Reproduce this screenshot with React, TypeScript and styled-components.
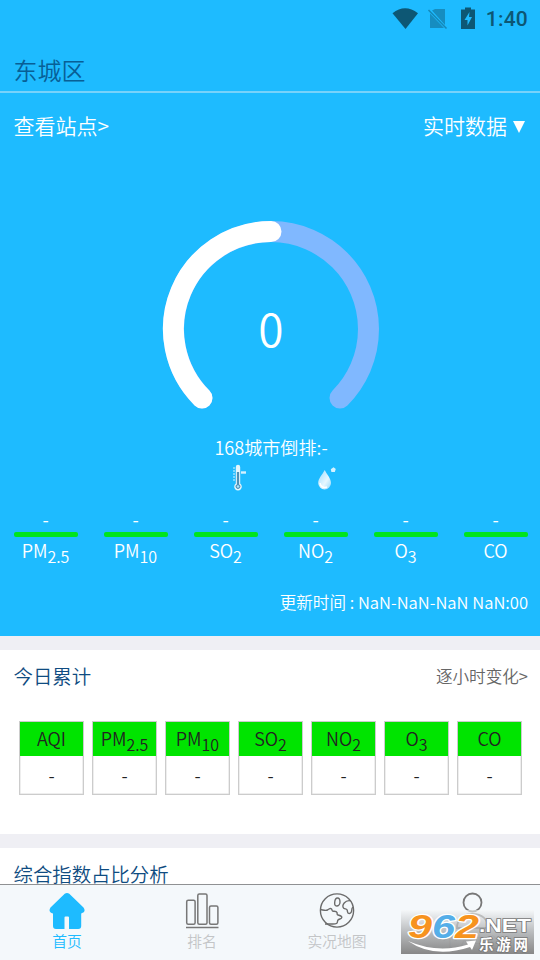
import type { ReactNode } from 'react';
import styled, { createGlobalStyle } from 'styled-components';

const GlobalStyle = createGlobalStyle`
  * {
    box-sizing: border-box;
  }

  body {
    margin: 0;
    font-family: "Noto Sans CJK SC", "Noto Sans", sans-serif;
    font-weight: 350;
  }
`

const Screen = styled.div`
  position: relative;
  display: flex;
  flex-direction: column;
  width: 540px;
  height: 960px;
  overflow: hidden;
  background: #fff;
`

const Header = styled.header`
  flex: none;
  height: 93px;
  background: #1ebbff;
  border-bottom: 2px solid #78d2fa;
`

const StatusBar = styled.div`
  display: flex;
  justify-content: flex-end;
  align-items: center;
  height: 37px;
  padding-right: 12px;
  color: #0d5774;
`

const StatusIcons = styled.svg`
  width: 86px;
  height: 24px;
  margin-right: 8px;
`

const Clock = styled.span`
  font: 500 21px/24px Roboto, sans-serif;
  letter-spacing: 0.2px;
`

const City = styled.div`
  padding: 15px 13.5px 0;
  font-size: 24px;
  line-height: 36px;
  color: #085f96;
`

const Content = styled.main`
  flex: 1;
  min-height: 0;
  overflow: hidden;
  background: #efeff4;
`

const Hero = styled.section`
  display: flex;
  flex-direction: column;
  height: 543px;
  background: #1ebbff;
  color: #fff;
`

const HeroLinks = styled.div`
  display: flex;
  justify-content: space-between;
  padding: 17px 15px 0 13.5px;
  font-size: 21px;
  line-height: 30px;
`

const Select = styled.div`
  display: flex;
  align-items: center;
  gap: 6px;
`

const Arrow = styled.i`
  margin-top: 3px;
  border: solid transparent;
  border-width: 12px 6px 0;
  border-top-color: #fff;
`

const Gauge = styled.svg`
  width: 220px;
  height: 200px;
  margin: 79px 0 0 161px;
`

const Rank = styled.div`
  margin-top: 14px;
  padding-left: 2px;
  font-size: 18.1px;
  line-height: 28px;
  text-align: center;
`

const Weather = styled.div`
  display: flex;
  gap: 64px;
  height: 32px;
  padding-left: 228px;

  svg {
    width: 24px;
    height: 32px;
  }
`

const Pollutants = styled.div`
  display: grid;
  grid-template-columns: repeat(6, 64px);
  column-gap: 26px;
  margin: 12px 0 0 13.5px;
`

const Pollutant = styled.div`
  font-size: 18px;
  line-height: 24px;
  text-align: center;

  sub {
    font-size: 16px;
    line-height: 0;
    vertical-align: -5px;
  }
`

const Level = styled.div`
  height: 27px;
  font-weight: 400;
  line-height: 28px;
`

const LevelBar = styled.div`
  height: 5px;
  margin-bottom: 1px;
  border-radius: 2px;
  background: #00e41e;
`

const Updated = styled.div`
  margin-top: 28px;
  padding-right: 12px;
  font-size: 16.6px;
  line-height: 24px;
  text-align: right;
`

const Panel = styled.section<{ $height: number }>`
  height: ${(p) => p.$height}px;
  margin-top: 14px;
  background: #fff;
`

const PanelHead = styled.div`
  display: flex;
  justify-content: space-between;
  align-items: center;
  padding: 12px 12px 0 13.5px;
  line-height: 28px;
`

const PanelTitle = styled.h2`
  margin: 0;
  font-size: 19.4px;
  font-weight: inherit;
  color: #0f4c81;
`

const PanelLink = styled.span`
  font-size: 16.6px;
  color: #666;
`

const Cards = styled.div`
  display: flex;
  justify-content: space-between;
  padding: 31px 18px 0 19px;
`

const Card = styled.div`
  width: 65px;
  height: 74px;
  border: 1px solid #ccc;
  box-shadow: inset 0 0 0 0.5px #ddd;
  font-size: 18px;
  text-align: center;
  color: #222;

  sub {
    font-size: 16px;
    line-height: 0;
    vertical-align: -5px;
  }
`

const CardHead = styled.div`
  height: 34px;
  line-height: 32px;
  background: #00e400;
`

const CardValue = styled.div`
  line-height: 38px;
`

const TabBar = styled.nav`
  display: grid;
  grid-template-columns: repeat(4, 1fr);
  flex: none;
  height: 76px;
  border-top: 1px solid #8f9193;
  background: #f4f8fb;
`

const Tab = styled.div<{ $active?: boolean }>`
  display: flex;
  flex-direction: column;
  align-items: center;
  padding: 7px 1px 0 0;
  font-size: 14.8px;
  line-height: 22px;
  color: ${(p) => (p.$active ? '#1ebbff' : '#c3c5c7')};

  svg {
    width: 38px;
    height: 38px;
  }
`

const Watermark = styled.div`
  position: absolute;
  left: 401px;
  top: 910px;
  width: 133px;
  height: 44px;
  background: linear-gradient(rgba(245, 247, 248, 0.6), rgba(175, 177, 179, 0.85) 50%, rgba(128, 128, 128, 0.94));

  svg {
    display: block;
  }
`

const pollutants: { key: string; label: ReactNode }[] = [
  { key: 'pm25', label: <>PM<sub>2.5</sub></> },
  { key: 'pm10', label: <>PM<sub>10</sub></> },
  { key: 'so2', label: <>SO<sub>2</sub></> },
  { key: 'no2', label: <>NO<sub>2</sub></> },
  { key: 'o3', label: <>O<sub>3</sub></> },
  { key: 'co', label: 'CO' },
]

const totals = [{ key: 'aqi', label: 'AQI' as ReactNode }, ...pollutants]

function AqiGauge() {
  return (
    <Gauge viewBox="161 219 220 200" fill="none" strokeWidth="21" strokeLinecap="round">
      <path d="M202 398A97.5 97.5 0 1 1 340 398" stroke="#80b8ff" />
      <path d="M202 398A97.5 97.5 0 0 1 271 231.5" stroke="#fff" />
      <text x="271" y="347" fill="#fff" fontSize="46" textAnchor="middle">0</text>
    </Gauge>
  )
}

function Thermometer() {
  return (
    <svg viewBox="228 462 24 32">
      <path d="M235.8 484.5V468a2.2 2.2 0 0 1 4.4 0v16.5a3.8 3.8 0 1 1-4.4 0Z" fill="#e5f6fc" />
      <path d="M236.900 473h2.200v12.500a2.300 2.300 0 1 1-2.200 0Z" fill="#4f8fb5" />
      <path d="M233 469h2M233 472h2M233 475h2M233 478h2M233 481h2" stroke="#d6f2ff" />
      <path d="M241 473.5h5" stroke="#d6f2ff" strokeWidth="2.4" />
      <circle cx="238" cy="487.5" r="1.3" fill="#a9e4ff" />
    </svg>
  )
}

function Droplet() {
  return (
    <svg viewBox="316 462 24 32">
      <defs>
        <linearGradient id="drop" x1="0" x2="1" y1="0" y2="1">
          <stop offset="0" stopColor="#9adcff" />
          <stop offset="0.6" stopColor="#e6f7ff" />
          <stop offset="1" stopColor="#94d9fb" />
        </linearGradient>
      </defs>
      <path d="M324.700 471c2 4.200 6.300 8.200 6.300 13a6.400 6.400 0 0 1-12.800 0c0-4.800 4.500-8.800 6.500-13Z" fill="url(#drop)" />
      <path d="M320 484c.5 4 4 5 7 4" stroke="#fff" strokeWidth="1.500" fill="none" />
      <path d="M333.500 468.200l2.300 1.700-1 3-3.400.2-.6-2.800Z" fill="#d6f2ff" />
    </svg>
  )
}

function HomeIcon() {
  return (
    <svg viewBox="48 892 38 38" fill="#1ebbff">
      <path d="M64.700 893.800q2.300-1.500 4.600 0L83.500 907.500q3 4.500-2.300 6V926q0 3-3 3H69v-11.500q0-1-1-1h-2.500q-1 0-1 1V929H56q-3 0-3-3v-12.500q-5.300-1.500-2.500-6Z" />
    </svg>
  )
}

function RankIcon() {
  return (
    <svg viewBox="183.500 892 38 38" fill="none" stroke="#777" strokeWidth="1.500">
      <rect x="187.200" y="900.200" width="8.400" height="24" rx="1.500" />
      <rect x="198.300" y="894" width="9.200" height="30.200" rx="1.500" />
      <rect x="210" y="906" width="8.400" height="18.200" rx="1.500" />
      <path d="M186.500 927.500h32.500" />
    </svg>
  )
}

function GlobeIcon() {
  return (
    <svg viewBox="318 892 38 38" fill="none" stroke="#6b6b6b" strokeWidth="1.400" strokeLinejoin="round">
      <circle cx="337" cy="910.500" r="16.600" />
      <path d="M337.500 898c1.500 0 2.500 2 2.500 4s-1.500 4-3.300 4-2.200-1.500-2-3.700 1.200-4.300 2.800-4.300Z" />
      <path d="M350.500 900.800c-3-.6-5 .7-6.300 2.200s-2 4-.5 5.200 2.500 0 3.300 1.600.2 3.400 1.700 3.600 3-1 3-3 .3-2.700 1.300-3.200" />
      <path d="M320.500 909.500c3 .5 5 1.500 7 .5s2.500-2.300 3.800-1.200.2 2.200 1.700 2.400 3.500-.2 4 1.300-.5 2 1 2.500 4 .8 3.800 2.500-2.800 1.200-3.800 2.500 0 2.700-1.500 3.500-3.500.5-6 .5h-5.500" />
    </svg>
  )
}

function UserIcon() {
  return (
    <svg viewBox="453 892 38 38" fill="none" stroke="#777" strokeWidth="1.800">
      <circle cx="472.500" cy="902.500" r="9" />
      <path d="M457 928c0-9 6-14 15.500-14s15.500 5 15.500 14Z" />
    </svg>
  )
}

function SiteMark() {
  return (
    <Watermark>
      <svg width="133" height="44" viewBox="0 0 133 44">
        <g fontFamily="Liberation Sans, sans-serif" fontWeight="700" fontStyle="italic" fontSize="34" stroke="#fff" strokeWidth="2.500" paintOrder="stroke" strokeLinejoin="round">
          <text x="7" y="28" textLength="24" lengthAdjust="spacingAndGlyphs" fill="#f7931e">9</text>
          <text x="31" y="28" textLength="23" lengthAdjust="spacingAndGlyphs" fill="#55aee8">6</text>
          <text x="54" y="28" textLength="24" lengthAdjust="spacingAndGlyphs" fill="#f7931e">2</text>
        </g>
        <path d="M7 31Q37 44 67 34.500L65 31.500 75 30.500 71 40 69 37Q33 49 7 31Z" fill="#fff" />
        <g fill="#fff" stroke="#777" strokeWidth="1.500" paintOrder="stroke" fontWeight="700">
          <text x="78" y="22" fontFamily="Liberation Sans, sans-serif" fontSize="19" textLength="52" lengthAdjust="spacingAndGlyphs">.NET</text>
          <text x="78" y="39.500" fontSize="14.500" textLength="49">乐游网</text>
        </g>
      </svg>
    </Watermark>
  )
}

export default function App() {
  return (
    <Screen>
      <GlobalStyle />
      <Header>
        <StatusBar>
          <StatusIcons viewBox="392 6 86 24" fill="currentColor">
            <path d="M392.500 12.200Q405 2.500 418 12.200L405.500 28Z" />
            <path d="M432 9.500l3-1.500h10v16ZM430 12.500l14 14.500h-14Z" opacity="0.450" />
            <path d="M428.500 9l18 18.500" stroke="currentColor" strokeWidth="1.500" opacity="0.500" />
            <path d="M461 8.500h4V6.500h6v2h4V28h-14Z" />
            <path d="M469.500 11l-5 8h3v5.500l4.500-8.500h-3Z" fill="#1ebbff" />
          </StatusIcons>
          <Clock>1:40</Clock>
        </StatusBar>
        <City>东城区</City>
      </Header>

      <Content>
        <Hero>
          <HeroLinks>
            <span>查看站点&gt;</span>
            <Select>实时数据<Arrow /></Select>
          </HeroLinks>
          <AqiGauge />
          <Rank>168城市倒排:-</Rank>
          <Weather>
            <Thermometer />
            <Droplet />
          </Weather>
          <Pollutants>
            {pollutants.map((item) => (
              <Pollutant key={item.key}>
                <Level>-</Level>
                <LevelBar />
                {item.label}
              </Pollutant>
            ))}
          </Pollutants>
          <Updated>更新时间 : NaN-NaN-NaN NaN:00</Updated>
        </Hero>

        <Panel $height={184}>
          <PanelHead>
            <PanelTitle>今日累计</PanelTitle>
            <PanelLink>逐小时变化&gt;</PanelLink>
          </PanelHead>
          <Cards>
            {totals.map((item) => (
              <Card key={item.key}>
                <CardHead>{item.label}</CardHead>
                <CardValue>-</CardValue>
              </Card>
            ))}
          </Cards>
        </Panel>

        <Panel $height={200}>
          <PanelHead>
            <PanelTitle>综合指数占比分析</PanelTitle>
          </PanelHead>
        </Panel>
      </Content>

      <TabBar>
        <Tab $active><HomeIcon />首页</Tab>
        <Tab><RankIcon />排名</Tab>
        <Tab><GlobeIcon />实况地图</Tab>
        <Tab><UserIcon />个人中心</Tab>
      </TabBar>
      <SiteMark />
    </Screen>
  )
};
